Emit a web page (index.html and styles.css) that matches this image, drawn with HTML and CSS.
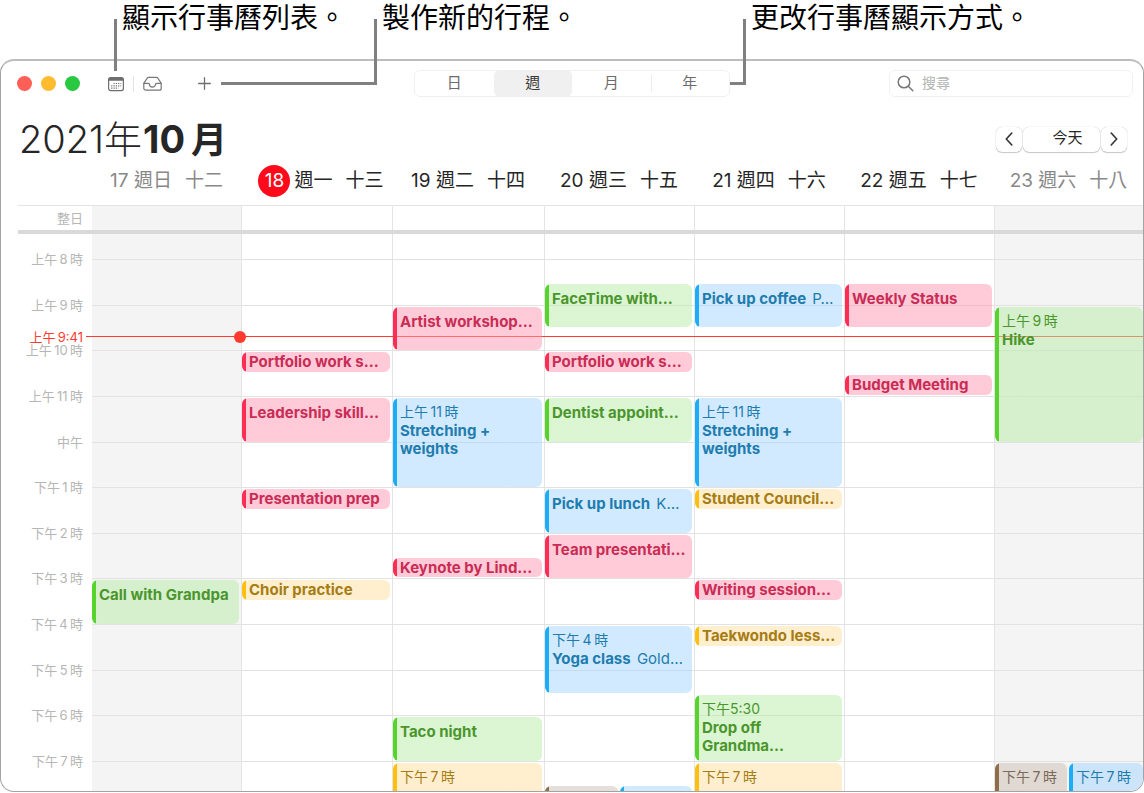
FILE: index.html
```html
<!DOCTYPE html>
<html lang="zh-Hant">
<head>
    <meta charset="UTF-8">
    <meta name="viewport" content="width=device-width, initial-scale=1.0">
    <title>行事曆</title>
    <link rel="stylesheet" href="styles.css">
</head>
<body>

    <div class="callouts">
        <p class="callout callout-list">顯示行事曆列表。</p>
        <p class="callout callout-new">製作新的行程。</p>
        <p class="callout callout-view">更改行事曆顯示方式。</p>
    </div>

    <main class="window">
        <header class="toolbar">
            <div class="tools">
                <span class="lights"><i class="light close"></i><i class="light minimize"></i><i class="light zoom"></i></span>
                <button class="tool" aria-label="行事曆列表">
                    <svg width="16" height="16" viewBox="0 0 16 16">
                        <rect x="0.6" y="1.6" width="14.8" height="13" rx="2" fill="none" stroke="#6e6e6e" stroke-width="1.2"/>
                        <path d="M0.6 4.8V3.4a2 2 0 0 1 2-2h10.8a2 2 0 0 1 2 2v1.4z" fill="#6e6e6e"/>
                        <path d="M5.6 7.5h7.6M3.2 9.8h10M3.2 12.1h7.2" stroke="#6e6e6e" stroke-width="1.2" stroke-dasharray="1.2 1.1"/>
                    </svg>
                </button>
                <span class="divider"></span>
                <button class="tool" aria-label="收件匣">
                    <svg width="19" height="16" viewBox="0 0 19 16" fill="none" stroke="#777" stroke-width="1.2" stroke-linejoin="round" stroke-linecap="round">
                        <path d="M0.8 7.4L4 2.4Q4.6 1.4 5.8 1.4h7.4q1.2 0 1.8 1l3.2 5v4.8a2 2 0 0 1-2 2H2.8a2 2 0 0 1-2-2z"/>
                        <path d="M0.8 7.4h4.6q0.9 0 1.1 0.9a3 2.8 0 0 0 6 0q0.2-0.9 1.1-0.9h4.6"/>
                    </svg>
                </button>
                <button class="tool tool-add" aria-label="新增行程">
                    <svg width="13" height="13" viewBox="0 0 13 13" stroke="#6e6e6e" stroke-width="1.3" stroke-linecap="round">
                        <path d="M6.5 0.7v11.6M0.7 6.5h11.6"/>
                    </svg>
                </button>
            </div>
            <nav class="views">
                <button class="view">日</button>
                <button class="view active">週</button>
                <button class="view">月</button>
                <button class="view last">年</button>
            </nav>
            <label class="search">
                <svg width="17" height="17" viewBox="0 0 17 17" fill="none" stroke="#777" stroke-width="1.5" stroke-linecap="round">
                    <circle cx="7" cy="7" r="5.8"/>
                    <path d="M11.3 11.3l4.5 4.5"/>
                </svg>
                <input type="search" placeholder="搜尋" aria-label="搜尋">
            </label>
        </header>

        <div class="heading">
            <h1>2021年<b>10<span class="month">月</span></b></h1>
            <div class="nav">
                <button class="step" aria-label="上一週"><svg width="8" height="14" viewBox="0 0 8 14"><path d="M6.8 1L1.3 7l5.5 6"/></svg></button>
                <button class="step today">今天</button>
                <button class="step" aria-label="下一週"><svg width="8" height="14" viewBox="0 0 8 14"><path d="M1.2 1l5.5 6-5.5 6"/></svg></button>
            </div>
        </div>

        <div class="columns day-names">
            <span></span>
            <div class="day-name weekend">17 週日<span>十二</span></div>
            <div class="day-name"><b class="current">18</b>週一<span>十三</span></div>
            <div class="day-name">19 週二<span>十四</span></div>
            <div class="day-name">20 週三<span>十五</span></div>
            <div class="day-name">21 週四<span>十六</span></div>
            <div class="day-name">22 週五<span>十七</span></div>
            <div class="day-name weekend">23 週六<span>十八</span></div>
        </div>

        <div class="columns all-day">
            <span class="label">整日</span>
            <div class="day weekend"></div>
            <div class="day"></div>
            <div class="day"></div>
            <div class="day"></div>
            <div class="day"></div>
            <div class="day"></div>
            <div class="day weekend"></div>
        </div>

        <!-- one row for each half hour, row 2 starts at 8:00 -->
        <div class="columns week">
            <span class="label" style="grid-row: 2">上午&thinsp;8&thinsp;時</span>
            <span class="label" style="grid-row: 4">上午&thinsp;9&thinsp;時</span>
            <span class="label" style="grid-row: 6">上午&thinsp;10&thinsp;時</span>
            <span class="label" style="grid-row: 8">上午&thinsp;11&thinsp;時</span>
            <span class="label" style="grid-row: 10">中午</span>
            <span class="label" style="grid-row: 12">下午&thinsp;1&thinsp;時</span>
            <span class="label" style="grid-row: 14">下午&thinsp;2&thinsp;時</span>
            <span class="label" style="grid-row: 16">下午&thinsp;3&thinsp;時</span>
            <span class="label" style="grid-row: 18">下午&thinsp;4&thinsp;時</span>
            <span class="label" style="grid-row: 20">下午&thinsp;5&thinsp;時</span>
            <span class="label" style="grid-row: 22">下午&thinsp;6&thinsp;時</span>
            <span class="label" style="grid-row: 24">下午&thinsp;7&thinsp;時</span>

            <i class="line" style="grid-row: 2"></i>
            <i class="line" style="grid-row: 4"></i>
            <i class="line" style="grid-row: 6"></i>
            <i class="line" style="grid-row: 8"></i>
            <i class="line" style="grid-row: 10"></i>
            <i class="line" style="grid-row: 12"></i>
            <i class="line" style="grid-row: 14"></i>
            <i class="line" style="grid-row: 16"></i>
            <i class="line" style="grid-row: 18"></i>
            <i class="line" style="grid-row: 20"></i>
            <i class="line" style="grid-row: 22"></i>
            <i class="line" style="grid-row: 24"></i>

            <!-- 41 minutes past 9 -->
            <div class="now" style="grid-row: 4 / 6; top: 68%">
                <span class="now-label">上午&thinsp;9:41</span>
                <i class="now-line"></i>
                <i class="now-dot"></i>
            </div>

            <section class="day weekend">
                <article class="event green" style="grid-row: 16 / 18"><b>Call with Grandpa</b></article>
            </section>

            <section class="day">
                <article class="event pink short" style="grid-row: 6 / 7"><b>Portfolio work s…</b></article>
                <article class="event pink" style="grid-row: 8 / 10"><b>Leadership skill…</b></article>
                <article class="event pink short" style="grid-row: 12 / 13"><b>Presentation prep</b></article>
                <article class="event yellow short" style="grid-row: 16 / 17"><b>Choir practice</b></article>
            </section>

            <section class="day">
                <article class="event pink" style="grid-row: 4 / 6"><b>Artist workshop…</b></article>
                <article class="event blue" style="grid-row: 8 / 12"><time>上午&thinsp;11&thinsp;時</time><b>Stretching +<br>weights</b></article>
                <article class="event pink short" style="grid-row: 15 / 16"><b>Keynote by Lind…</b></article>
                <article class="event green" style="grid-row: 22 / 24"><b>Taco night</b></article>
                <article class="event yellow cut" style="grid-row: 24 / 26"><time>下午&thinsp;7&thinsp;時</time></article>
            </section>

            <section class="day">
                <article class="event green" style="grid-row: 3 / 5"><b>FaceTime with…</b></article>
                <article class="event pink short" style="grid-row: 6 / 7"><b>Portfolio work s…</b></article>
                <article class="event green" style="grid-row: 8 / 10"><b>Dentist appoint…</b></article>
                <article class="event blue" style="grid-row: 12 / 14"><b>Pick up lunch</b> <span>K…</span></article>
                <article class="event pink" style="grid-row: 14 / 16"><b>Team presentati…</b></article>
                <article class="event blue" style="grid-row: 18 / 21"><time>下午&thinsp;4&thinsp;時</time><b>Yoga class</b> <span>Gold…</span></article>
                <article class="event brown cut left" style="grid-row: 25 / 26"></article>
                <article class="event blue cut right" style="grid-row: 25 / 26"></article>
            </section>

            <section class="day">
                <article class="event blue" style="grid-row: 3 / 5"><b>Pick up coffee</b> <span>P…</span></article>
                <article class="event blue" style="grid-row: 8 / 12"><time>上午&thinsp;11&thinsp;時</time><b>Stretching +<br>weights</b></article>
                <article class="event yellow short" style="grid-row: 12 / 13"><b>Student Council…</b></article>
                <article class="event pink short" style="grid-row: 16 / 17"><b>Writing session…</b></article>
                <article class="event yellow short" style="grid-row: 18 / 19"><b>Taekwondo less…</b></article>
                <article class="event green" style="grid-row: 21 / 24"><time>下午5:30</time><b>Drop off<br>Grandma…</b></article>
                <article class="event yellow cut" style="grid-row: 24 / 26"><time>下午&thinsp;7&thinsp;時</time></article>
            </section>

            <section class="day">
                <article class="event pink" style="grid-row: 3 / 5"><b>Weekly Status</b></article>
                <article class="event pink short" style="grid-row: 7 / 8"><b>Budget Meeting</b></article>
            </section>

            <section class="day weekend">
                <article class="event green" style="grid-row: 4 / 10"><time>上午&thinsp;9&thinsp;時</time><b>Hike</b></article>
                <article class="event brown cut left" style="grid-row: 24 / 26"><time>下午&thinsp;7&thinsp;時</time></article>
                <article class="event blue cut right" style="grid-row: 24 / 26"><time>下午&thinsp;7&thinsp;時</time></article>
            </section>
        </div>
    </main>

</body>
</html>
```
FILE: styles.css
```css
* {
    box-sizing: border-box;
}
body {
    margin: 0;
    padding-bottom: 1px;
    height: 100vh;
    min-height: 700px;
    display: flex;
    flex-direction: column;
    position: relative;
    overflow: hidden;
    background: white;
    color: #262626;
    font-family: Inter, "Noto Sans CJK TC", sans-serif;
}
button, input {
    font: inherit;
    color: inherit;
    border: none;
    background: none;
    padding: 0;
    margin: 0;
}
svg {
    display: block;
}

/* callouts over the window */
.callouts {
    height: 59px;
    flex: none;
}
.callout {
    position: absolute;
    top: 0;
    margin: 0;
    font-size: 28px;
    line-height: 36px;
    font-weight: 400;
    color: black;
    white-space: nowrap;
    z-index: 3;
}
.callout::before {
    content: "";
    position: absolute;
    top: 19px;
    border-color: #808080;
    border-style: solid;
    border-width: 0;
}
.callout-list {
    left: 122px;
}
.callout-list::before {
    left: -8px;
    height: 52px;
    border-left-width: 3px;
}
.callout-new {
    left: 382px;
}
.callout-new::before {
    right: calc(100% + 5px);
    width: 153px;
    height: 63px;
    border-right-width: 3px;
    border-bottom-width: 3px;
}
.callout-view {
    left: calc(50% + 179px);
}
.callout-view::before {
    left: -21px;
    width: 13px;
    height: 63px;
    border-right-width: 3px;
    border-bottom-width: 3px;
}

.window {
    flex: 1;
    min-height: 0;
    display: flex;
    flex-direction: column;
    border: 1px solid #a3a3a3;
    border-top: 2px solid #bdbdbd;
    border-radius: 14px;
    overflow: hidden;
}

/* toolbar */
.toolbar {
    display: grid;
    grid-template-columns: 1fr 316px 1fr;
    align-items: center;
    padding: 9px 10px 21px;
}
.tools {
    display: flex;
    align-items: center;
    padding-left: 6px;
}
.lights {
    display: flex;
    gap: 9px;
    margin-right: 28px;
}
.light {
    width: 15px;
    height: 15px;
    border-radius: 50%;
}
.close {
    background: #ff5f57;
}
.minimize {
    background: #febc2e;
}
.zoom {
    background: #28c840;
}
.divider {
    width: 1px;
    height: 16px;
    margin: 0 9px;
    background: #e4e4e4;
}
.tool-add {
    margin-left: 36px;
}
.views {
    display: flex;
    height: 27px;
    border: 1px solid #f0f0f0;
    border-radius: 6px;
}
.view {
    flex: 1;
    padding-bottom: 2px;
    font-size: 15px;
    line-height: 22px;
    color: #6c6c6c;
}
.view.active {
    margin: -1px 0;
    background: #f0f0f0;
    border-radius: 6px;
    color: #3a3a3a;
}
.view.last {
    background: linear-gradient(#ececec, #ececec) left center / 1px 17px no-repeat;
}
.search {
    justify-self: end;
    display: flex;
    align-items: center;
    gap: 8px;
    width: 244px;
    height: 27px;
    padding: 0 7px;
    border: 1px solid #f0f0f0;
    border-radius: 6px;
}
.search input {
    flex: 1;
    min-width: 0;
    height: 24px;
    padding-bottom: 2px;
    font-size: 14px;
    line-height: 22px;
    outline: none;
}
.search input::placeholder {
    color: #b4b4b4;
}

/* month and navigation */
.heading {
    display: flex;
    justify-content: space-between;
    align-items: center;
    height: 42px;
    padding: 0 16px 0 18px;
}
h1 {
    margin: 0;
    font-size: 38px;
    line-height: 42px;
    font-weight: 300;
}
h1 b {
    margin-left: 1px;
    font-weight: 700;
}
.month {
    margin-left: 6px;
    font-size: 36px;
}
.nav {
    display: flex;
    gap: 1px;
}
.step {
    width: 26px;
    height: 25px;
    display: flex;
    align-items: center;
    justify-content: center;
    border-radius: 6px;
    box-shadow: 0 0 1px rgba(0, 0, 0, 0.3), 0 1px 1px rgba(0, 0, 0, 0.2);
}
.step path {
    fill: none;
    stroke: #333;
    stroke-width: 1.6;
    stroke-linecap: round;
    stroke-linejoin: round;
}
.today {
    width: 77px;
    padding: 0 0 2px 12px;
    font-size: 15px;
    line-height: 22px;
}

/* shared columns: hour labels and seven days */
.columns {
    display: grid;
    grid-template-columns: 74px 149fr 151fr 152fr 150fr 150fr 150fr 149fr;
    margin-left: 17px;
}
.day-names {
    height: 45px;
    padding-bottom: 4px;
}
.day-name {
    display: flex;
    align-items: center;
    justify-content: center;
    font-size: 19px;
    line-height: 32px;
    white-space: pre;
}
.day-name span {
    margin-left: 13px;
}
.day-name.weekend {
    color: #888;
}
.current {
    width: 32px;
    height: 32px;
    margin: 0 4px 0 9px;
    border-radius: 50%;
    background: #ff0a1b;
    color: white;
    font-weight: 400;
    text-align: center;
}
.label {
    font-size: 13px;
    line-height: 14px;
    color: #b6b6b6;
    text-align: right;
    padding-right: 9px;
    white-space: nowrap;
}
.all-day {
    height: 29px;
    border-top: 1px solid #e4e4e4;
    border-bottom: 4px solid #d9d9d9;
}
.all-day .label {
    align-self: center;
}
.day {
    border-left: 1px solid #e4e4e4;
}
.day.weekend {
    background: #f4f4f4;
}
.label + .day {
    border-left: none;
}

/* hours */
.week {
    flex: 1;
    min-height: 0;
    grid-template-rows: 25px repeat(22, 1fr) 23px 7px;
}
.week .label {
    grid-column: 1;
    margin-top: -7px;
    height: 14px;
}
.week .day {
    grid-row: 1 / -1;
    display: grid;
    grid-template-columns: 1fr 1fr;
    grid-template-rows: subgrid;
}
.week .day:nth-of-type(1) { grid-column: 2; border-left: none; }
.week .day:nth-of-type(2) { grid-column: 3; }
.week .day:nth-of-type(3) { grid-column: 4; }
.week .day:nth-of-type(4) { grid-column: 5; }
.week .day:nth-of-type(5) { grid-column: 6; }
.week .day:nth-of-type(6) { grid-column: 7; }
.week .day:nth-of-type(7) { grid-column: 8; }
.line {
    grid-column: 2 / -1;
    height: 1px;
    background: #e2e2e2;
    position: relative;
    z-index: 1;
}
.now {
    grid-column: 1 / -1;
    align-self: start;
    display: grid;
    grid-template-columns: subgrid;
    align-items: center;
    height: 14px;
    margin-top: -6px;
    position: relative;
    z-index: 1;
}
.now-label {
    grid-area: 1 / 1;
    padding-right: 9px;
    font-size: 13px;
    line-height: 14px;
    color: #ff3b30;
    text-align: right;
}
.now-line {
    grid-area: 1 / 1 / 2 / -1;
    height: 1px;
    margin-left: 68px;
    background: #ff3b30;
}
.now-dot {
    grid-area: 1 / 3;
    width: 12px;
    height: 12px;
    margin-left: -7px;
    border-radius: 50%;
    background: #ff3b30;
}

/* events */
.event {
    grid-column: 1 / -1;
    position: relative;
    z-index: 2;
    margin: 2px 2px 0 0;
    padding: 6px 0 0 7px;
    border-radius: 6px;
    background: linear-gradient(to right, var(--bar) 4px, var(--fill) 4px);
    color: var(--text);
    font-size: 15px;
    line-height: 18px;
    white-space: nowrap;
    overflow: hidden;
}
.event time {
    display: block;
    margin-bottom: 2px;
    font-size: 14px;
    line-height: 16px;
}
.event b {
    font-weight: 700;
}
.event span {
    margin-left: 2px;
}
.short {
    margin-bottom: 1px;
    padding-top: 1px;
}
.cut {
    border-radius: 6px 6px 0 0;
}
.left {
    grid-column: 1 / 2;
}
.right {
    grid-column: 2 / 3;
}
.day:last-child .event {
    margin-right: 0;
}
.day:last-child .left {
    margin-right: 2px;
}
.pink {
    --bar: #ff2d55;
    --fill: rgba(255, 151, 177, 0.5);
    --text: #c92c55;
}
.green {
    --bar: #57d42c;
    --fill: rgba(183, 236, 167, 0.5);
    --text: #4b962c;
}
.blue {
    --bar: #1badf8;
    --fill: rgba(165, 213, 255, 0.5);
    --text: #217cae;
}
.yellow {
    --bar: #ffbf0f;
    --fill: rgba(255, 223, 157, 0.5);
    --text: #a67c14;
}
.brown {
    --bar: #8f6d49;
    --fill: rgba(205, 189, 177, 0.5);
    --text: #7b6a59;
}
```
